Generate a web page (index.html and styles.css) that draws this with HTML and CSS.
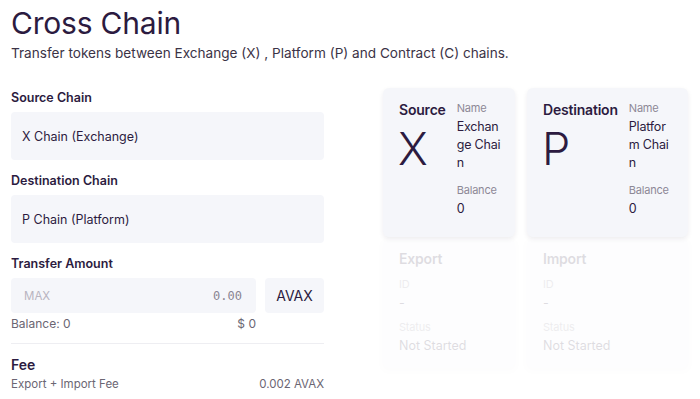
FILE: index.html
```html
<!DOCTYPE html>
<html lang="en">
<head>
  <meta charset="UTF-8" />
  <meta name="viewport" content="width=device-width, initial-scale=1.0" />
  <title>Cross Chain</title>
  <link rel="stylesheet" href="styles.css">
</head>
<body>
  <div class="page">
    <h1>Cross Chain</h1>
    <p class="subtitle">Transfer tokens between Exchange (X) , Platform (P) and Contract (C) chains.</p>

    <div class="layout">
      <div class="form">
        <div class="field">
          <label>Source Chain</label>
          <div class="select">X Chain (Exchange)</div>
        </div>
        <div class="field">
          <label>Destination Chain</label>
          <div class="select">P Chain (Platform)</div>
        </div>
        <div class="field">
          <label>Transfer Amount</label>
          <div class="amount-row">
            <div class="amount">
              <span class="max">MAX</span>
              <span class="value">0.00</span>
            </div>
            <div class="ticker">AVAX</div>
          </div>
          <div class="balance-row">
            <span>Balance: 0</span>
            <span>$ 0</span>
          </div>
        </div>
        <hr>
        <div class="fee">
          <h3>Fee</h3>
          <div class="fee-row">
            <span>Export + Import Fee</span>
            <span>0.002 AVAX</span>
          </div>
        </div>
      </div>

      <div class="cards">
        <div class="card">
          <div class="chain-side">
            <h4>Source</h4>
            <div class="chain-letter">X</div>
          </div>
          <div class="chain-info">
            <div class="key">Name</div>
            <div class="val">Exchange Chain</div>
            <div class="key spaced">Balance</div>
            <div class="val">0</div>
          </div>
        </div>
        <div class="card">
          <div class="chain-side">
            <h4>Destination</h4>
            <div class="chain-letter">P</div>
          </div>
          <div class="chain-info">
            <div class="key">Name</div>
            <div class="val">Platform Chain</div>
            <div class="key spaced">Balance</div>
            <div class="val">0</div>
          </div>
        </div>
        <div class="card tx-card">
          <div>
            <h4>Export</h4>
            <div class="key">ID</div>
            <div class="val">-</div>
            <div class="key spaced">Status</div>
            <div class="val">Not Started</div>
          </div>
        </div>
        <div class="card tx-card">
          <div>
            <h4>Import</h4>
            <div class="key">ID</div>
            <div class="val">-</div>
            <div class="key spaced">Status</div>
            <div class="val">Not Started</div>
          </div>
        </div>
      </div>
    </div>
  </div>
</body>
</html>
```

FILE: styles.css
```css
* {
  margin: 0;
  padding: 0;
  box-sizing: border-box;
  font-family: 'Inter', 'Noto Sans', sans-serif;
}
body {
  background-color: #ffffff;
  color: #2c1b40;
}
.page {
  padding: 4px 11px 0 11px;
}
h1 {
  font-size: 30px;
  font-weight: 400;
  line-height: 38px;
  letter-spacing: -0.2px;
}
.subtitle {
  font-size: 13.6px;
  line-height: 20px;
  margin-top: 1px;
  color: #3b3346;
}
.layout {
  display: grid;
  grid-template-columns: 313px auto;
  gap: 59px;
  margin-top: 25px;
}
.field {
  margin-bottom: 12px;
}
.field label {
  display: block;
  font-size: 12.5px;
  font-weight: 600;
  line-height: 18px;
  margin-bottom: 5px;
  margin-top: 1px;
}
.select {
  background-color: #f5f6fa;
  border-radius: 4px;
  height: 48px;
  padding: 0 11px;
  display: flex;
  align-items: center;
  font-size: 12.5px;
  color: #2c1b40;
}
.amount-row {
  display: flex;
  gap: 9px;
}
.amount {
  flex: 1;
  background-color: #f5f6fa;
  border-radius: 4px;
  height: 35px;
  display: flex;
  align-items: center;
  justify-content: space-between;
  padding: 0 14px 0 13px;
}
.max {
  font-size: 11.5px;
  color: #b8b4c0;
}
.value {
  font-family: 'DejaVu Sans Mono', monospace;
  font-size: 12px;
  color: #8a8592;
}
.ticker {
  width: 59px;
  background-color: #f5f6fa;
  border-radius: 4px;
  height: 35px;
  display: flex;
  align-items: center;
  justify-content: center;
  font-size: 14px;
  color: #2c1b40;
}
.balance-row {
  display: flex;
  justify-content: space-between;
  width: 245px;
  margin-top: 4px;
  font-size: 12px;
  line-height: 14px;
  color: #6b6673;
}
hr {
  border: none;
  border-top: 1px solid #eeeef2;
  margin-top: 5px;
}
.fee {
  margin-top: 12px;
}
.fee h3 {
  font-size: 14px;
  font-weight: 600;
  line-height: 18px;
}
.fee-row {
  display: flex;
  justify-content: space-between;
  font-size: 11.5px;
  line-height: 18px;
  color: #6b6673;
  margin-top: 1px;
}
.cards {
  display: grid;
  grid-template-columns: 132px 161px;
  column-gap: 12px;
  row-gap: 2px;
  align-content: start;
}
.card {
  background-color: #f5f6fa;
  border-radius: 6px;
  box-shadow: 0 2px 5px rgba(40, 30, 70, 0.08);
  padding: 12px 12px 20px 16px;
  display: flex;
  gap: 11px;
  height: 149px;
}
.chain-side {
  flex: none;
}
.chain-side h4,
.tx-card h4 {
  font-size: 14px;
  font-weight: 600;
  line-height: 20px;
  white-space: nowrap;
  letter-spacing: -0.2px;
}
.chain-letter {
  font-size: 45px;
  font-weight: 300;
  line-height: 44px;
  margin-top: 7px;
  margin-left: -1px;
}
.chain-info {
  flex: none;
  width: 45px;
  word-break: break-all;
}
.key {
  font-size: 11px;
  line-height: 16px;
  color: #8d8896;
  letter-spacing: -0.2px;
}
.val {
  font-size: 12.5px;
  line-height: 18px;
  color: #2c1b40;
  margin-top: 2px;
}
.chain-info .val {
  letter-spacing: -0.2px;
}
.key.spaced {
  margin-top: 10px;
}
.tx-card {
  opacity: 0.15;
  height: 129px;
  padding-top: 10px;
}
.tx-card h4 {
  margin-bottom: 7px;
}
.tx-card .key.spaced {
  margin-top: 7px;
}
```
